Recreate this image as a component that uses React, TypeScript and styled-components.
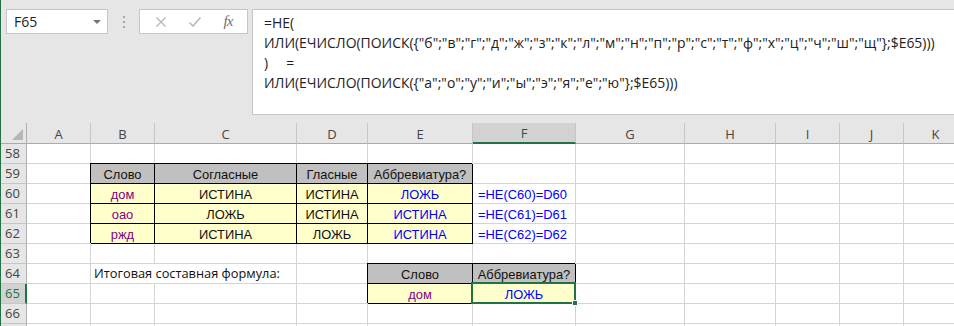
import React from "react";
import styled, { createGlobalStyle, css } from "styled-components";

const GlobalStyle = createGlobalStyle`
  html, body { margin: 0; padding: 0; overflow: hidden; background: #e6e6e6; }
  * { box-sizing: border-box; }
`;

const UI_FONT = `"Open Sans", "Noto Sans", sans-serif`;
const CELL_FONT = `"Liberation Sans", Arial, sans-serif`;
const GREEN = "#217346";
const GRID = "#d4d4d4";

const COLS: { key: string; width: number }[] = [
  { key: "A", width: 64 },
  { key: "B", width: 64 },
  { key: "C", width: 142 },
  { key: "D", width: 71 },
  { key: "E", width: 105 },
  { key: "F", width: 103 },
  { key: "G", width: 109 },
  { key: "H", width: 91 },
  { key: "I", width: 64 },
  { key: "J", width: 64 },
  { key: "K", width: 64 },
];

type Kind = "head" | "word" | "value" | "bool" | "formula" | "label";
type CellData = { kind: Kind; text: string; selected?: boolean };

const ROWS: { n: number; cells: Record<string, CellData> }[] = [
  { n: 58, cells: {} },
  {
    n: 59,
    cells: {
      B: { kind: "head", text: "Слово" },
      C: { kind: "head", text: "Согласные" },
      D: { kind: "head", text: "Гласные" },
      E: { kind: "head", text: "Аббревиатура?" },
    },
  },
  {
    n: 60,
    cells: {
      B: { kind: "word", text: "дом" },
      C: { kind: "value", text: "ИСТИНА" },
      D: { kind: "value", text: "ИСТИНА" },
      E: { kind: "bool", text: "ЛОЖЬ" },
      F: { kind: "formula", text: "=НЕ(C60)=D60" },
    },
  },
  {
    n: 61,
    cells: {
      B: { kind: "word", text: "оао" },
      C: { kind: "value", text: "ЛОЖЬ" },
      D: { kind: "value", text: "ИСТИНА" },
      E: { kind: "bool", text: "ИСТИНА" },
      F: { kind: "formula", text: "=НЕ(C61)=D61" },
    },
  },
  {
    n: 62,
    cells: {
      B: { kind: "word", text: "ржд" },
      C: { kind: "value", text: "ИСТИНА" },
      D: { kind: "value", text: "ЛОЖЬ" },
      E: { kind: "bool", text: "ИСТИНА" },
      F: { kind: "formula", text: "=НЕ(C62)=D62" },
    },
  },
  { n: 63, cells: {} },
  {
    n: 64,
    cells: {
      B: { kind: "label", text: "Итоговая составная формула:" },
      E: { kind: "head", text: "Слово" },
      F: { kind: "head", text: "Аббревиатура?" },
    },
  },
  {
    n: 65,
    cells: {
      E: { kind: "word", text: "дом" },
      F: { kind: "bool", text: "ЛОЖЬ", selected: true },
    },
  },
  { n: 66, cells: {} },
];

const SELECTED_COL = "F";
const SELECTED_ROW = 65;

/* ---------- window & formula bar ---------- */

const Window = styled.div`
  width: 954px;
  height: 326px;
  overflow: hidden;
  background: #e6e6e6;
  border-left: 1px solid ${GREEN};
  display: flex;
  flex-direction: column;
`;

const FormulaBar = styled.div`
  display: flex;
  align-items: flex-start;
  padding: 9px 0 0 5px;
  height: 123px;
  flex-shrink: 0;
`;

const NameBox = styled.div`
  width: 102px;
  height: 25px;
  background: #fff;
  border: 1px solid #c6c6c6;
  display: flex;
  align-items: center;
  justify-content: space-between;
  padding: 0 6px 0 7px;
  font: 14px ${UI_FONT};
  color: #222;
`;

const DropArrow = styled.span`
  width: 0;
  height: 0;
  border-left: 4px solid transparent;
  border-right: 4px solid transparent;
  border-top: 4px solid #777;
`;

const Grip = styled.div`
  width: 31px;
  height: 25px;
  display: flex;
  flex-direction: column;
  align-items: center;
  justify-content: center;
  gap: 3px;
  & > span {
    width: 2px;
    height: 2px;
    background: #a8a8a8;
  }
`;

const ButtonsBox = styled.div`
  width: 109px;
  height: 25px;
  background: #fff;
  border: 1px solid #c6c6c6;
  display: flex;
  align-items: center;
  justify-content: space-around;
  padding: 0 4px;
`;

const Fx = styled.span`
  font: italic 15px "Liberation Serif", "Times New Roman", serif;
  color: #707070;
  letter-spacing: -1px;
`;

const FormulaBox = styled.div`
  flex: 1;
  margin-left: 4px;
  height: 106px;
  background: #fff;
  border: 1px solid #c6c6c6;
  border-right: none;
  padding: 3px 0 0 11px;
  font: 13.95px ${UI_FONT};
  line-height: 20px;
  color: #222;
  white-space: pre;
`;

/* ---------- sheet ---------- */

const Sheet = styled.div`
  flex: 1;
  display: grid;
  grid-template-columns: 26px ${COLS.map((c) => c.width + "px").join(" ")};
  grid-auto-rows: 20px;
  grid-template-rows: 21px;
  align-content: start;
  background: #fff;
`;

const Corner = styled.div`
  background: #e6e6e6;
  border-right: 1px solid #b0b0b0;
  border-bottom: 1px solid #ababab;
  display: flex;
  align-items: flex-end;
  justify-content: flex-end;
  padding: 0 3px 3px 0;
`;

const ColHead = styled.div<{ $active?: boolean }>`
  background: ${(p) => (p.$active ? "#d2d2d2" : "#e6e6e6")};
  border-right: 1px solid #c6c6c6;
  border-bottom: ${(p) => (p.$active ? `2px solid ${GREEN}` : "1px solid #ababab")};
  display: flex;
  align-items: center;
  justify-content: center;
  padding-top: 1px;
  font: 13px ${UI_FONT};
  color: ${(p) => (p.$active ? "#1e5b39" : "#444")};
`;

const RowHead = styled.div<{ $active?: boolean }>`
  background: ${(p) => (p.$active ? "#d2d2d2" : "#e6e6e6")};
  border-right: ${(p) => (p.$active ? `2px solid ${GREEN}` : "1px solid #b0b0b0")};
  border-bottom: 1px solid #c6c6c6;
  display: flex;
  align-items: flex-end;
  padding: 0 0 1px 4px;
  font: 13px ${UI_FONT};
  color: ${(p) => (p.$active ? GREEN : "#444")};
`;

const kindStyles: Record<Kind, ReturnType<typeof css>> = {
  head: css`
    background: #c0c0c0;
    color: #111;
    justify-content: center;
  `,
  word: css`
    background: #ffffcc;
    color: #800080;
    justify-content: center;
  `,
  value: css`
    background: #ffffcc;
    color: #111;
    justify-content: center;
  `,
  bool: css`
    background: #ffffcc;
    color: #0000ff;
    justify-content: center;
  `,
  formula: css`
    color: #0000ff;
    justify-content: flex-start;
    padding-left: 5px;
  `,
  label: css`
    color: #111;
    justify-content: flex-start;
    padding-left: 3px;
    font: 12.8px ${UI_FONT};
  `,
};

const Cell = styled.div<{ $kind?: Kind; $boxed?: boolean; $spill?: boolean }>`
  position: relative;
  background: #fff;
  border-right: 1px solid ${(p) => (p.$boxed ? "#000" : p.$spill ? "#fff" : GRID)};
  border-bottom: 1px solid ${(p) => (p.$boxed ? "#000" : GRID)};
  ${(p) => p.$boxed && "box-shadow: -1px -1px 0 0 #000;"}
  display: flex;
  align-items: flex-end;
  padding-bottom: 1px;
  font: 12.9px ${CELL_FONT};
  white-space: nowrap;
  ${(p) => p.$kind && kindStyles[p.$kind]}
`;

const Spill = styled.span`
  position: relative;
  z-index: 1;
`;

const Selection = styled.div`
  position: absolute;
  left: -2px;
  top: -2px;
  right: -1px;
  bottom: -1px;
  border: 2px solid ${GREEN};
  z-index: 2;
  pointer-events: none;
`;

const FillHandle = styled.div`
  position: absolute;
  right: -4px;
  bottom: -4px;
  width: 6px;
  height: 6px;
  background: ${GREEN};
  border: 1px solid #fff;
`;

function CancelIcon() {
  return (
    <svg width="12" height="12" viewBox="0 0 12 12">
      <path d="M1.5 1.5 L10.5 10.5 M10.5 1.5 L1.5 10.5" stroke="#b8b8b8" strokeWidth="1.4" />
    </svg>
  );
}

function EnterIcon() {
  return (
    <svg width="14" height="12" viewBox="0 0 14 12">
      <path d="M1.5 6.5 L5 10 L12.5 1.5" stroke="#b8b8b8" strokeWidth="1.6" fill="none" />
    </svg>
  );
}

function SelectAll() {
  return (
    <svg width="11" height="11" viewBox="0 0 11 11">
      <path d="M11 0 L11 11 L0 11 Z" fill="#b5b5b5" />
    </svg>
  );
}

const FORMULA = [
  "=НЕ(",
  'ИЛИ(ЕЧИСЛО(ПОИСК({"б";"в";"г";"д";"ж";"з";"к";"л";"м";"н";"п";"р";"с";"т";"ф";"х";"ц";"ч";"ш";"щ"};$E65)))',
  ")     =",
  'ИЛИ(ЕЧИСЛО(ПОИСК({"а";"о";"у";"и";"ы";"э";"я";"е";"ю"};$E65)))',
].join("\n");

export default function App() {
  return (
    <>
      <GlobalStyle />
      <Window>
        <FormulaBar>
          <NameBox>
            <span>F65</span>
            <DropArrow />
          </NameBox>
          <Grip>
            <span />
            <span />
            <span />
          </Grip>
          <ButtonsBox>
            <CancelIcon />
            <EnterIcon />
            <Fx>fx</Fx>
          </ButtonsBox>
          <FormulaBox>{FORMULA}</FormulaBox>
        </FormulaBar>
        <Sheet>
          <Corner>
            <SelectAll />
          </Corner>
          {COLS.map((c) => (
            <ColHead key={c.key} $active={c.key === SELECTED_COL}>
              {c.key}
            </ColHead>
          ))}
          {ROWS.map((r) => (
            <React.Fragment key={r.n}>
              <RowHead $active={r.n === SELECTED_ROW}>{r.n}</RowHead>
              {COLS.map((c) => {
                const d = r.cells[c.key];
                if (!d) return <Cell key={c.key} />;
                const boxed = d.kind !== "formula" && d.kind !== "label";
                return (
                  <Cell key={c.key} $kind={d.kind} $boxed={boxed} $spill={d.kind === "label"}>
                    {d.kind === "label" ? <Spill>{d.text}</Spill> : d.text}
                    {d.selected && (
                      <Selection>
                        <FillHandle />
                      </Selection>
                    )}
                  </Cell>
                );
              })}
            </React.Fragment>
          ))}
          <RowHead />
          {COLS.map((c) => (
            <Cell key={"tail-" + c.key} />
          ))}
        </Sheet>
      </Window>
    </>
  );
}
